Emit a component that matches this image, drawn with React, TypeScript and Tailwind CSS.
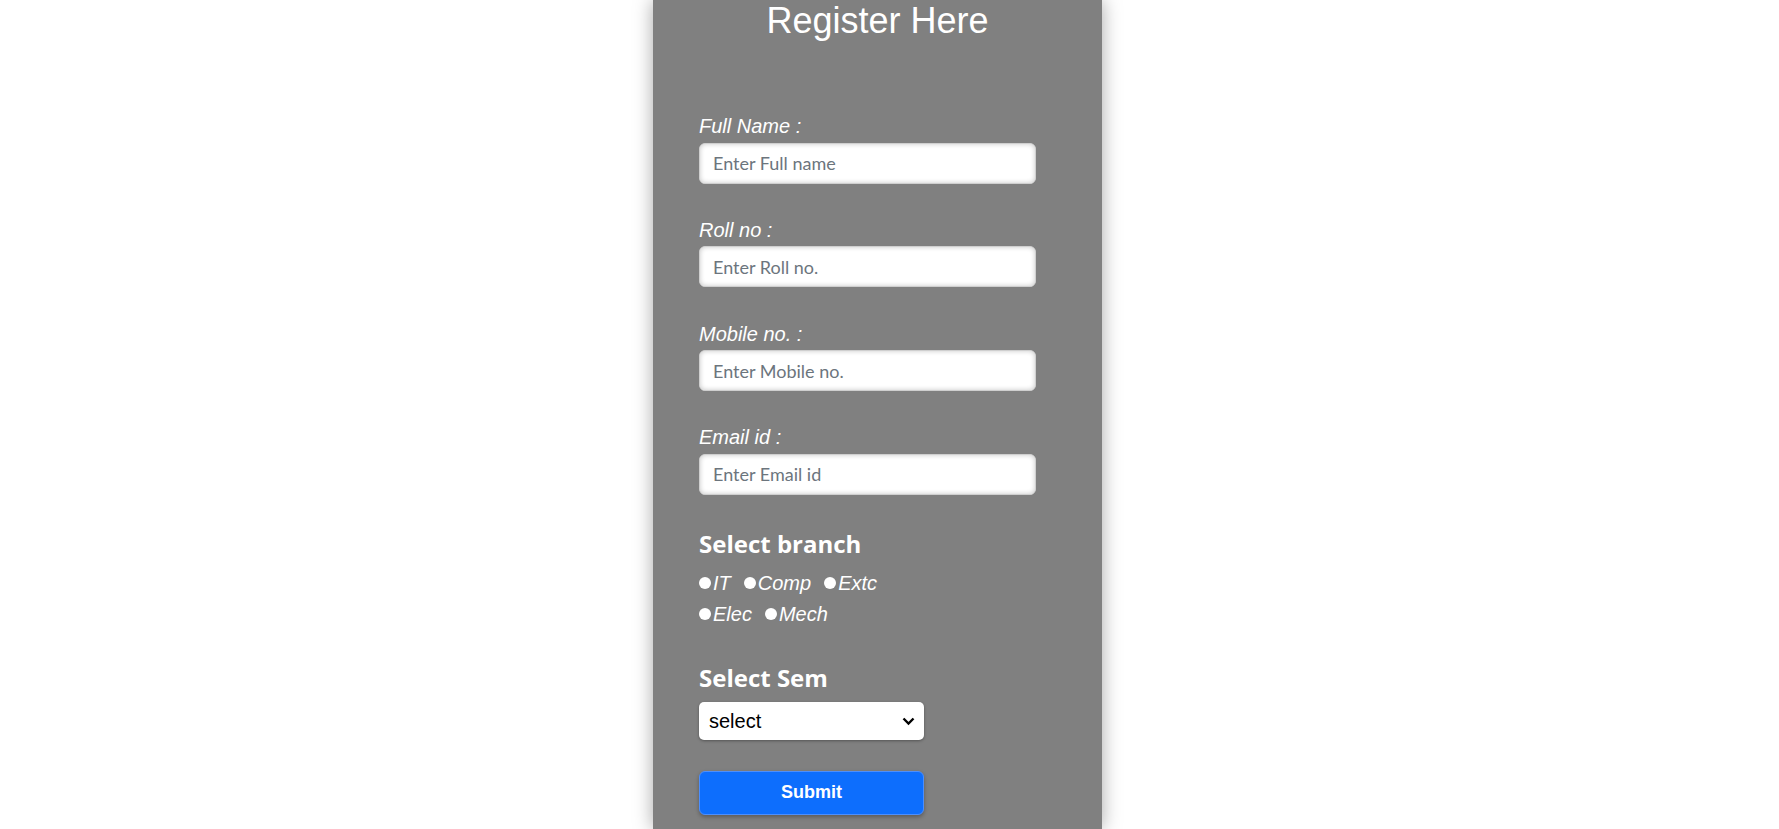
import { useState } from 'react'

const fields = [
  { label: 'Full Name :', placeholder: 'Enter Full name' },
  { label: 'Roll no :', placeholder: 'Enter Roll no.' },
  { label: 'Mobile no. :', placeholder: 'Enter Mobile no.' },
  { label: 'Email id :', placeholder: 'Enter Email id' },
]

const branches = ['IT', 'Comp', 'Extc', 'Elec', 'Mech']

const arial = { fontFamily: '"Liberation Sans", Arial, sans-serif' }
const heading = { fontFamily: '"Open Sans", Lato, sans-serif' }
const placeholderFont = { fontFamily: 'Lato, "Open Sans", sans-serif' }

const App = () => {
  const [branch, setBranch] = useState('')

  return (
    <div className="min-h-screen bg-white flex pl-[653px]" style={arial}>
      <div className="w-[449px] min-h-[829px] bg-[#808080] shadow-[0_0_18px_rgba(0,0,0,0.35)]">
        <h1 className="text-center text-white text-[36px] leading-normal font-normal mt-[-6px]">
          Register Here
        </h1>

        <form className="mt-[67px] pl-[46px]" onSubmit={(e) => e.preventDefault()}>
          {fields.map((field) => (
            <div key={field.label} className="mb-[35.3px]">
              <label className="block text-white italic text-[20px] leading-[23px] mb-[4.5px]">
                {field.label}
              </label>
              <input
                type="text"
                placeholder={field.placeholder}
                className="block w-[337px] h-[41px] rounded-[6px] bg-white pl-[13px] border border-[#cfcfcf] shadow-[inset_0_0_5px_rgba(0,0,0,0.22)] text-[18px] text-[#212529] placeholder:text-[#6c757d] outline-none"
                style={placeholderFont}
              />
            </div>
          ))}

          <h4 className="text-white font-bold text-[24px] leading-[1.2] mt-[2px]" style={heading}>
            Select branch
          </h4>
          <div className="w-[225px] mt-[9px] flex flex-wrap gap-x-[13px]">
            {branches.map((b) => (
              <label
                key={b}
                className="flex items-center h-[31px] text-white italic text-[20px] leading-[23px] cursor-pointer"
                onClick={() => setBranch(b)}
              >
                <span className="w-[12px] h-[12px] rounded-full bg-white mr-[2px] flex items-center justify-center">
                  {branch === b && <span className="w-[5px] h-[5px] rounded-full bg-[#0d6efd]" />}
                </span>
                {b}
              </label>
            ))}
          </div>

          <h4 className="text-white font-bold text-[24px] leading-[1.2] mt-[34px]" style={heading}>
            Select Sem
          </h4>
          <div className="relative w-[225px] h-[38px] mt-[9px]">
            <select className="appearance-none w-full h-full rounded-[5px] bg-white pl-[10px] text-[20px] text-black shadow-[0_1px_3px_rgba(0,0,0,0.35)] outline-none">
              <option>select</option>
              <option>Sem 1</option>
              <option>Sem 2</option>
              <option>Sem 3</option>
              <option>Sem 4</option>
              <option>Sem 5</option>
              <option>Sem 6</option>
              <option>Sem 7</option>
              <option>Sem 8</option>
            </select>
            <svg
              className="absolute right-[9px] top-[14px] pointer-events-none"
              width="13"
              height="10"
              viewBox="0 0 13 10"
              fill="none"
            >
              <path d="M1.5 2.5l5 5 5-5" stroke="#000" strokeWidth="2.4" />
            </svg>
          </div>

          <button
            type="submit"
            className="block w-[225px] h-[44px] mt-[31px] rounded-[6px] bg-[#0d6efd] border border-[#4d8ffd] text-white font-bold text-[18px] shadow-[0_2px_4px_rgba(0,0,0,0.3)]"
          >
            Submit
          </button>
        </form>
      </div>
    </div>
  )
}

export default App
